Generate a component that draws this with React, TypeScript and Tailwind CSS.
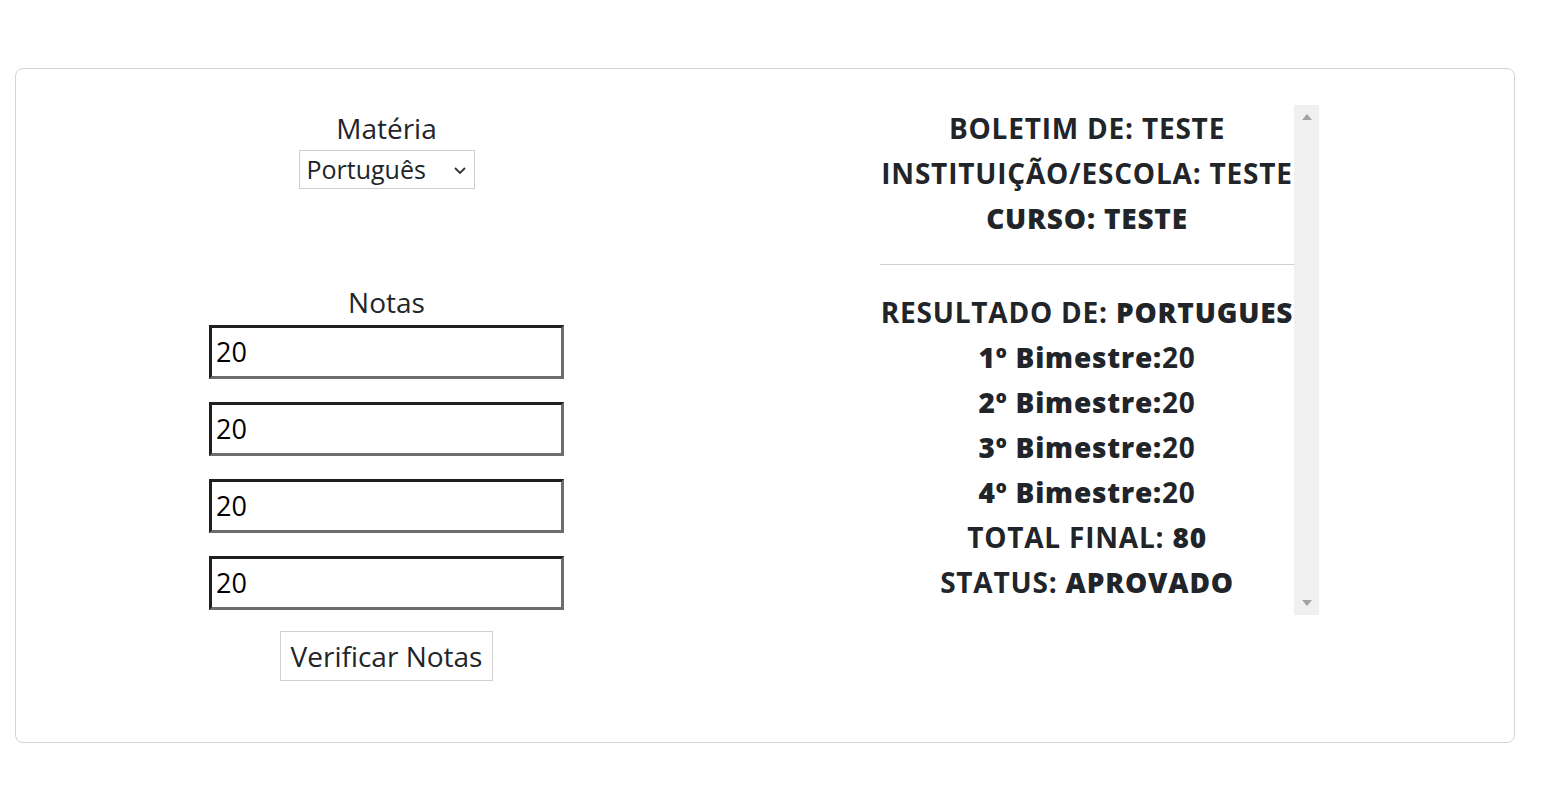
import React from 'react';

const notas = ['20', '20', '20', '20'];

const Linha: React.FC<{ label: string; valor: string }> = ({ label, valor }) => (
  <div className="h-[45px] leading-[45px] whitespace-nowrap">
    <span className="font-bold">{label}</span>
    <span className="font-extrabold">{valor}</span>
  </div>
);

const Bimestre: React.FC<{ n: number; valor: string }> = ({ n, valor }) => (
  <div className="h-[45px] leading-[45px] whitespace-nowrap">
    <span className="font-extrabold">{n}º Bimestre:</span>
    <span className="font-bold">{valor}</span>
  </div>
);

const App: React.FC = () => {
  return (
    <div className="min-h-[798px] bg-white pt-[68px] px-[15px] text-[#212529] font-['Open_Sans',sans-serif]">
      <div className="w-[1500px] h-[675px] border border-[#d4d4d4] rounded-lg flex">
        {/* formulario */}
        <div className="w-[741px] flex flex-col items-center pt-[41px]">
          <label className="text-[28px] leading-[36px]">Matéria</label>
          <div className="mt-[4px] w-[176px] h-[39px] border border-[#cfcfcf] flex items-center justify-between pl-[7px] pr-[6px]">
            <span className="text-[25px]">Português</span>
            <svg width="16" height="16" viewBox="0 0 16 16" fill="none" stroke="#333" strokeWidth="1.8">
              <path d="M3 6l5 5 5-5" />
            </svg>
          </div>
          <label className="mt-[95px] text-[28px] leading-[36px]">Notas</label>
          <div className="mt-[5px] flex flex-col gap-[23px]">
            {notas.map((n, i) => (
              <div
                key={i}
                className="w-[355px] h-[54px] border-[3px] border-t-[#1f1f1f] border-l-[#1f1f1f] border-b-[#6d6d6d] border-r-[#6d6d6d] flex items-center pl-[4px] text-[27px] text-black"
              >
                {n}
              </div>
            ))}
          </div>
          <button className="mt-[21px] w-[213px] h-[50px] border border-[#d0d0d0] bg-white text-[28px]">
            Verificar Notas
          </button>
        </div>
        {/* boletim */}
        <div className="ml-[123px] mt-[36px] w-[439px] h-[510px] flex">
          <div className="w-[414px] pt-[1px] flex flex-col items-center text-center text-[28px] tracking-[0.8px]">
            <div className="h-[45px] leading-[45px] font-bold whitespace-nowrap">BOLETIM DE: TESTE</div>
            <div className="h-[45px] leading-[45px] font-bold whitespace-nowrap">INSTITUIÇÃO/ESCOLA: TESTE</div>
            <div className="h-[45px] leading-[45px] font-extrabold whitespace-nowrap">CURSO: TESTE</div>
            <div className="w-full h-px bg-[#cfcfcf] mt-[23px] mb-[25px]" />
            <Linha label="RESULTADO DE: " valor="PORTUGUES" />
            <Bimestre n={1} valor="20" />
            <Bimestre n={2} valor="20" />
            <Bimestre n={3} valor="20" />
            <Bimestre n={4} valor="20" />
            <Linha label="TOTAL FINAL: " valor="80" />
            <Linha label="STATUS: " valor="APROVADO" />
          </div>
          <div className="w-[25px] h-full bg-[#f0f0f0] flex flex-col items-center justify-between py-[9px]">
            <svg width="10" height="6" viewBox="0 0 10 6"><path d="M0 6L5 0l5 6z" fill="#a3a3a3" /></svg>
            <svg width="10" height="6" viewBox="0 0 10 6"><path d="M0 0h10L5 6z" fill="#a3a3a3" /></svg>
          </div>
        </div>
      </div>
    </div>
  );
};

export default App;
